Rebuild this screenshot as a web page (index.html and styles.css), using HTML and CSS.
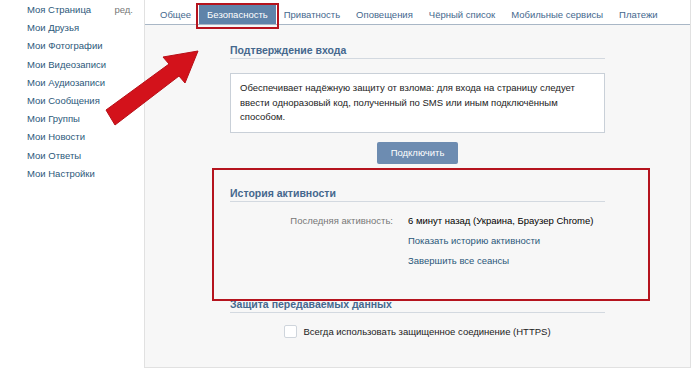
FILE: index.html
```html
<!DOCTYPE html>
<html lang="ru">
<head>
    <meta charset="UTF-8">
    <title>Мои Настройки</title>
    <link rel="stylesheet" href="styles.css">
</head>
<body>
    <div class="page">
        <aside class="sidebar">
            <ul class="menu">
                <li><a href="#">Моя Страница</a><a href="#" class="edit">ред.</a></li>
                <li><a href="#">Мои Друзья</a></li>
                <li><a href="#">Мои Фотографии</a></li>
                <li><a href="#">Мои Видеозаписи</a></li>
                <li><a href="#">Мои Аудиозаписи</a></li>
                <li><a href="#">Мои Сообщения</a></li>
                <li><a href="#">Мои Группы</a></li>
                <li><a href="#">Мои Новости</a></li>
                <li><a href="#">Мои Ответы</a></li>
                <li><a href="#">Мои Настройки</a></li>
            </ul>
        </aside>

        <main class="panel">
            <nav class="tabs">
                <a href="#" class="tab">Общее</a>
                <a href="#" class="tab tab-active">Безопасность<span class="mark tab-mark"></span></a>
                <a href="#" class="tab">Приватность</a>
                <a href="#" class="tab">Оповещения</a>
                <a href="#" class="tab">Чёрный список</a>
                <a href="#" class="tab">Мобильные сервисы</a>
                <a href="#" class="tab">Платежи</a>
            </nav>

            <div class="content">
                <section class="settings-block">
                    <h2 class="block-title">Подтверждение входа</h2>
                    <div class="info-box">
                        Обеспечивает надёжную защиту от взлома: для входа на страницу следует
                        ввести одноразовый код, полученный по SMS или иным подключённым
                        способом.
                    </div>
                    <div class="button-row">
                        <button class="action-button">Подключить</button>
                    </div>
                </section>

                <section class="settings-block activity">
                    <span class="mark activity-mark"></span>
                    <h2 class="block-title">История активности</h2>
                    <div class="info-row">
                        <div class="info-label">Последняя активность:</div>
                        <div class="info-value">6 минут назад (Украина, Браузер Chrome)</div>
                    </div>
                    <div class="info-row">
                        <div class="info-label"></div>
                        <a href="#" class="info-link">Показать историю активности</a>
                    </div>
                    <div class="info-row">
                        <div class="info-label"></div>
                        <a href="#" class="info-link">Завершить все сеансы</a>
                    </div>
                </section>

                <section class="settings-block secure">
                    <h2 class="block-title">Защита передаваемых данных</h2>
                    <label class="check-row">
                        <span class="checkbox"></span>
                        Всегда использовать защищенное соединение (HTTPS)
                    </label>
                </section>
            </div>
        </main>

        <svg class="arrow" width="700" height="372" viewBox="0 0 700 372">
            <polygon points="106,110 169,64 163,57 198,51 185,83 179,76 115,125" fill="#d3121b" stroke="#b80f17" stroke-width="1"/>
        </svg>
    </div>
</body>
</html>
```

FILE: styles.css
```css
body {
    margin: 0;
    background-color: #ffffff;
    font-family: "Liberation Sans", Arial, sans-serif;
    font-size: 9.5px;
    color: #222222;
}
a {
    color: #2b587a;
    text-decoration: none;
}
.page {
    position: relative;
    display: flex;
    width: 700px;
    height: 372px;
}

/* left menu */
.sidebar {
    width: 144px;
    flex-shrink: 0;
}
.menu {
    list-style: none;
    margin: 0;
    padding: 1px 0 0 27px;
}
.menu li {
    display: flex;
    height: 18.2px;
    line-height: 18px;
}
.menu .edit {
    margin-left: auto;
    margin-right: 11px;
    color: #777777;
}

/* settings panel */
.panel {
    width: 545px;
    height: 367px;
    border: 1px solid #e1e1e1;
    border-top: none;
    background-color: #f7f7f7;
}
.tabs {
    display: flex;
    height: 19px;
    padding: 5px 0 0 7px;
    background-color: #ffffff;
    border-bottom: 1px solid #a9b7c6;
}
.tab {
    position: relative;
    padding: 0 8px;
    line-height: 19px;
    color: #45688e;
}
.tab-active {
    background-color: #5f83a9;
    color: #ffffff;
}
.mark {
    position: absolute;
    box-sizing: border-box;
    border: 2px solid #b5141e;
    pointer-events: none;
}
.tab-mark {
    top: -2px;
    left: -3px;
    right: -3px;
    bottom: -5px;
}

.content {
    width: 375px;
    margin: 0 auto;
    padding-top: 18px;
}
.block-title {
    margin: 0;
    padding-bottom: 1px;
    font-size: 10.5px;
    line-height: 14px;
    color: #45688e;
    border-bottom: 1px solid #d3d9e0;
}
.info-box {
    margin-top: 14px;
    padding: 7px 9px;
    line-height: 14.5px;
    background-color: #ffffff;
    border: 1px solid #c9d0d8;
}
.button-row {
    margin-top: 9px;
    text-align: center;
}
.action-button {
    width: 81px;
    height: 22px;
    padding: 0;
    border: none;
    border-radius: 2px;
    background-color: #6d8cb1;
    color: #ffffff;
    font-family: inherit;
    font-size: 9.5px;
}

.activity {
    position: relative;
    margin-top: 22px;
}
.activity-mark {
    top: -18px;
    left: -18px;
    right: -45px;
    height: 133px;
}
.info-row {
    display: flex;
    gap: 15px;
    line-height: 14px;
    margin-top: 6px;
}
.info-row:nth-of-type(1) {
    margin-top: 12px;
}
.info-label {
    width: 163px;
    text-align: right;
    color: #777777;
}
.info-value {
    color: #000000;
}

.secure {
    margin-top: 29px;
}
.check-row {
    display: flex;
    align-items: center;
    justify-content: center;
    gap: 6px;
    margin-top: 12px;
    line-height: 14px;
}
.checkbox {
    width: 11px;
    height: 11px;
    background-color: #ffffff;
    border: 1px solid #cfd5dc;
    border-radius: 2px;
}

.arrow {
    position: absolute;
    left: 0;
    top: 0;
    pointer-events: none;
}
```
